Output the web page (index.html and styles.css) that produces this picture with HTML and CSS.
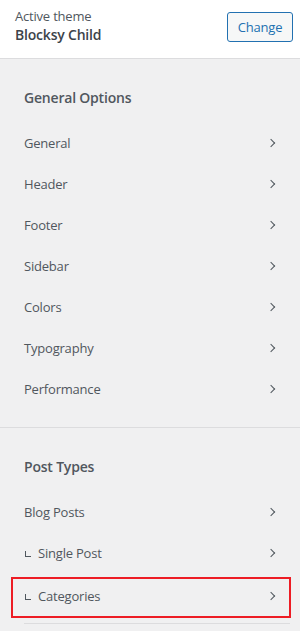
FILE: index.html
```html
<!doctype html>
<html>
<head>
    <meta charset="utf-8">
    <meta name="viewport" content="width=device-width, initial-scale=1">
    <title>Customizer</title>
    <link rel="stylesheet" href="styles.css">
</head>
<body>
    <header class="theme-bar">
        <div class="theme-info">
            <span class="theme-label">Active theme</span>
            <strong class="theme-name">Blocksy Child</strong>
        </div>
        <button type="button" class="change-btn">Change</button>
    </header>

    <section class="panel-group">
        <h3>General Options</h3>
        <ul class="panel-list">
            <li>General</li>
            <li>Header</li>
            <li>Footer</li>
            <li>Sidebar</li>
            <li>Colors</li>
            <li>Typography</li>
            <li>Performance</li>
        </ul>
    </section>

    <section class="panel-group">
        <h3>Post Types</h3>
        <ul class="panel-list">
            <li>Blog Posts</li>
            <li class="child">Single Post</li>
            <li class="child highlight">Categories</li>
        </ul>
        <div class="next-line"></div>
    </section>
</body>
</html>
```

FILE: styles.css
```css
/* Reset */
* { padding:0; margin:0; box-sizing:border-box; }

:root {
    --text: #50575e;
    --line: #dcdcde;
}

body {
    background-color: #f0f0f1;
    font-family: "Open Sans", "Noto Sans", Arial, sans-serif;
    color: var(--text);
    overflow: hidden;
}

/* Top bar */
.theme-bar {
    display: flex;
    justify-content: space-between;
    align-items: center;
    height: 59px;
    padding: 0 7px 5px 15px;
    background-color: #fff;
    border-bottom: 1px solid var(--line);
}
.theme-info { display:flex; flex-direction:column; }
.theme-label { font-size:13px; line-height:17px; letter-spacing:-0.2px; }
.theme-name { font-size:14px; line-height:20px; font-weight:600; color:#3c434a; letter-spacing:-0.2px; }
.change-btn {
    width: 66px;
    height: 30px;
    border: 1px solid #2271b1;
    border-radius: 3px;
    background-color: #f6f7f7;
    color: #2271b1;
    font-family: inherit;
    font-size: 13px;
    letter-spacing: -0.2px;
}

/* Panels */
.panel-group {
    padding: 29px 0 17px;
    border-bottom: 1px solid var(--line);
}
.panel-group h3 {
    font-size: 14px;
    line-height: 20px;
    font-weight: 600;
    padding-left: 24px;
    margin-bottom: 15px;
    letter-spacing: -0.2px;
}
.panel-list { list-style-type:none; }
.panel-list li {
    position: relative;
    height: 41px;
    line-height: 41px;
    padding-left: 24px;
    font-size: 13px;
    letter-spacing: -0.2px;
}
.panel-list li::after {
    content: "";
    position: absolute;
    right: 26px;
    top: 17px;
    width: 5px;
    height: 5px;
    border-top: 1.6px solid #50575e;
    border-right: 1.6px solid #50575e;
    transform: rotate(45deg);
}
.panel-list li.child { padding-left: 38px; }
.panel-list li.child::before {
    content: "";
    position: absolute;
    left: 25px;
    top: 18px;
    width: 5px;
    height: 5px;
    border-left: 1px solid #50575e;
    border-bottom: 1px solid #50575e;
}
.panel-list li.highlight {
    outline: 2px solid #ed1c24;
    outline-offset: -2px;
    margin: 3px 9px 0 11px;
    padding-left: 27px;
    height: 41px;
    line-height: 39px;
}
.panel-list li.highlight::before { left: 14px; top: 17px; }
.panel-list li.highlight::after { right: 17px; top: 16px; }
.next-line {
    margin: 5px 10px 0 24px;
    border-top: 1px solid var(--line);
}
```
